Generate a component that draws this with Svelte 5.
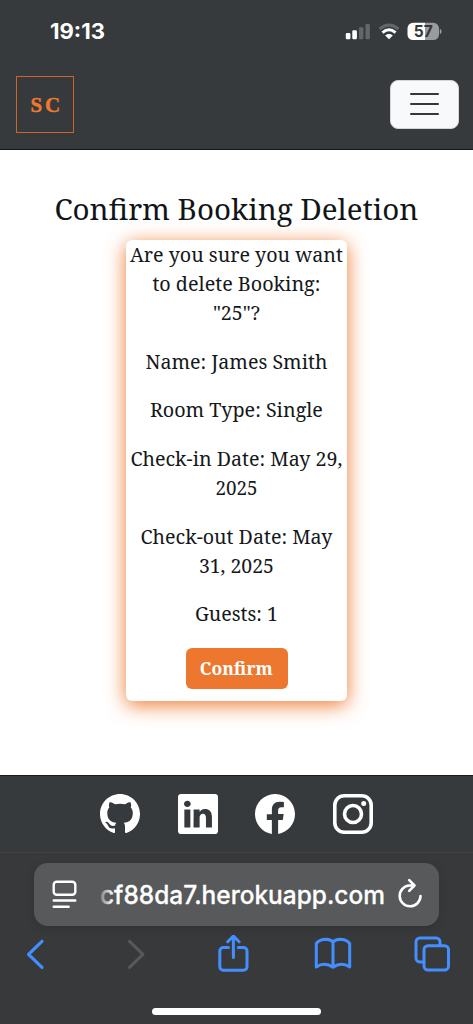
<script>
  const paragraphs = [
    [
      { text: 'Are you sure you want', width: 213 },
      { text: 'to delete Booking:', width: 168 },
      { text: '"25"?', width: 47 }
    ],
    [{ text: 'Name: James Smith', width: 182 }],
    [{ text: 'Room Type: Single', width: 173 }],
    [
      { text: 'Check-in Date: May 29,', width: 212 },
      { text: '2025', width: 42 }
    ],
    [
      { text: 'Check-out Date: May', width: 192 },
      { text: '31, 2025', width: 75 }
    ],
    [{ text: 'Guests: 1', width: 83 }]
  ];
</script>

<div class="screen">
  <header>
    <div class="status">
      <svg class="clock" width="60" height="24"><text x="1" y="18.900" textLength="55" lengthAdjust="spacingAndGlyphs">19:13</text></svg>
      <svg class="indicators" width="98" height="24" viewBox="0 0 98 24">
        <rect x="1.800" y="13" width="4.600" height="6.300" rx="1.200" fill="#fff" />
        <rect x="8.300" y="10.300" width="4.600" height="9" rx="1.200" fill="#fff" />
        <rect x="15" y="7.200" width="4.400" height="12.100" rx="1.200" fill="#646668" />
        <rect x="21.500" y="4" width="4.400" height="15.300" rx="1.200" fill="#646668" />
        <g fill="none" stroke-width="3">
          <path d="M35.600 9Q45 .9 54.400 9" stroke="#646668" />
          <path d="M38.500 12.600Q45 7 51.500 12.600" stroke="#fff" />
        </g>
        <path d="M41.200 15.500Q45 12.600 48.800 15.500L45 19.200Z" fill="#fff" />
        <path d="M69 2.800h12v17.200H69a5.500 5.500 0 0 1-5.500-5.500v-6.200A5.500 5.500 0 0 1 69 2.800Z" fill="#fff" />
        <path d="M81 2.800h8.500a5.500 5.500 0 0 1 5.500 5.500v6.200a5.500 5.500 0 0 1-5.500 5.500H81Z" fill="#9a9b9d" />
        <path d="M95.800 8.700q1.800 .8 1.800 2.800t-1.800 2.800Z" fill="#9a9b9d" />
        <text x="69.700" y="17" textLength="19" lengthAdjust="spacingAndGlyphs">57</text>
      </svg>
    </div>
    <nav>
      <div class="logo"><svg width="56" height="56"><text x="13.500" y="35">S</text><text x="28" y="35">C</text></svg></div>
      <button class="menu" aria-label="Menu"><i></i><i></i><i></i></button>
    </nav>
  </header>

  <main>
    <h1><svg width="380" height="46"><text x="7.400" y="32.700" textLength="364" lengthAdjust="spacingAndGlyphs">Confirm Booking Deletion</text></svg></h1>
    <section class="card">
      {#each paragraphs as lines}
        <p>
          {#each lines as line}
            <svg width="220" height="29"><text x={109.4 - line.width / 2} y="21.900" textLength={line.width} lengthAdjust="spacingAndGlyphs">{line.text}</text></svg>
          {/each}
        </p>
      {/each}
      <button class="confirm"><svg width="90" height="35"><text x="7.800" y="23.700" textLength="73" lengthAdjust="spacingAndGlyphs">Confirm</text></svg></button>
    </section>
  </main>

  <footer>
    <svg viewBox="0 0 16 16"><path d="M8 0C3.58 0 0 3.58 0 8c0 3.54 2.29 6.53 5.47 7.59.4.07.55-.17.55-.38 0-.19-.01-.82-.01-1.49-2.01.37-2.53-.49-2.69-.94-.09-.23-.48-.94-.82-1.13-.28-.15-.68-.52-.01-.53.63-.01 1.08.58 1.23.82.72 1.21 1.87.87 2.33.66.07-.52.28-.87.51-1.07-1.78-.2-3.64-.89-3.64-3.95 0-.87.31-1.59.82-2.15-.08-.2-.36-1.02.08-2.12 0 0 .67-.21 2.2.82.64-.18 1.32-.27 2-.27s1.36.09 2 .27c1.53-1.04 2.2-.82 2.2-.82.44 1.1.16 1.92.08 2.12.51.56.82 1.27.82 2.15 0 3.07-1.87 3.75-3.65 3.95.29.25.54.73.54 1.48 0 1.07-.01 1.93-.01 2.2 0 .21.15.46.55.38A8.01 8.01 0 0 0 16 8c0-4.42-3.58-8-8-8" /></svg>
    <svg viewBox="0 0 16 16"><path d="M0 1.146C0 .513.526 0 1.175 0h13.650C15.474 0 16 .513 16 1.146v13.708c0 .633-.526 1.146-1.175 1.146H1.175C.526 16 0 15.487 0 14.854zm4.943 12.248V6.169H2.542v7.225zm-1.200-8.212c.837 0 1.358-.554 1.358-1.248-.015-.709-.520-1.248-1.342-1.248S2.400 3.226 2.400 3.934c0 .694.521 1.248 1.327 1.248zm4.908 8.212V9.359c0-.216.016-.432.080-.586.173-.431.568-.878 1.232-.878.869 0 1.216.662 1.216 1.634v3.865h2.401V9.250c0-2.220-1.184-3.252-2.764-3.252-1.274 0-1.845.7-2.165 1.193V6.169h-2.400c.03.678 0 7.225 0 7.225z" /></svg>
    <svg viewBox="0 0 16 16"><path d="M16 8.049c0-4.446-3.582-8.050-8-8.050C3.580 0-.002 3.603-.002 8.050c0 4.017 2.926 7.347 6.750 7.951v-5.625h-2.030V8.050H6.750V6.275c0-2.017 1.195-3.131 3.022-3.131.876 0 1.791.157 1.791.157v1.980h-1.009c-.993 0-1.303.621-1.303 1.258v1.510h2.218l-.354 2.326H9.250V16c3.824-.604 6.750-3.934 6.750-7.951" /></svg>
    <svg viewBox="0 0 40 40"><g fill="none" stroke="#fff" stroke-width="3.600"><rect x="1.800" y="1.800" width="36.400" height="36.400" rx="9.500" /><circle cx="20" cy="20" r="8.500" /></g><circle cx="30.700" cy="9.400" r="2.500" /></svg>
  </footer>

  <div class="browser">
    <div class="address">
      <svg class="page" width="26" height="30" viewBox="0 0 26 30" fill="none" stroke="#fff" stroke-width="2.400" stroke-linecap="round"><rect x="1.700" y="1.700" width="21.600" height="13" rx="3" /><path d="M1.700 20.500h21.600M1.700 26.700h15" /></svg>
      <svg class="url" width="304" height="50">
        <defs><linearGradient id="fade" gradientUnits="userSpaceOnUse" x1="9" y1="0" x2="23" y2="0"><stop stop-color="#77787a" /><stop offset="1" stop-color="#fff" /></linearGradient></defs>
        <text x="10" y="33.600" textLength="285" lengthAdjust="spacingAndGlyphs">cf88da7.herokuapp.com</text>
      </svg>
      <svg class="reload" width="26" height="32" viewBox="0 0 26 32" fill="none" stroke="#fff" stroke-width="2.600" stroke-linecap="round" stroke-linejoin="round"><path d="M17.500 7.500H12.500A10.400 10.400 0 1 0 23.500 18M12.200 2.200l5.300 5.300-5.300 5.300" /></svg>
    </div>
    <div class="tools">
      <svg width="38" height="38" viewBox="0 0 38 38"><path d="M26 6.300L12.500 19.300 26 32.300" stroke-width="3.200" /></svg>
      <svg class="off" width="38" height="38" viewBox="0 0 38 38"><path d="M14.500 6.300l13.500 13-13.500 13" stroke-width="3" /></svg>
      <svg width="38" height="38" viewBox="0 0 38 38"><path d="M14.500 12.500H9.300a3.500 3.500 0 0 0-3.500 3.500v15.700a3.500 3.500 0 0 0 3.500 3.500h20.200a3.500 3.500 0 0 0 3.500-3.500V16a3.500 3.500 0 0 0-3.500-3.500h-5.200M19.400 22.500V1.500M13.700 6.800l5.700-5.700 5.700 5.700" /></svg>
      <svg width="38" height="38" viewBox="0 0 38 38"><path d="M19 7Q17 4.500 12 4.200C8 4.200 4.500 5.500 2.300 8.500V32Q10.500 26.500 19 32.200 27.500 26.500 35.700 32V8.500C33.500 5.500 30 4.200 26 4.200Q21 4.500 19 7v25" /></svg>
      <svg width="38" height="38" viewBox="0 0 38 38"><path d="M9.500 27H7A4 4 0 0 1 3 23V7a4 4 0 0 1 4-4h16a4 4 0 0 1 4 4v3" /><rect x="11" y="10.700" width="24.500" height="24.300" rx="4" /></svg>
    </div>
    <div class="home"></div>
  </div>
</div>

<style>
  :global(body) { margin: 0; background: #fff; }
  * { box-sizing: border-box; }
  .screen { width: 473px; height: 1024px; overflow: hidden; display: flex; flex-direction: column; background: #fff; }
  svg { display: block; flex: none; }
  header { height: 150px; background: #373a3c; border-bottom: 1px solid #17191a; }
  .status { height: 75px; padding: 20px 31px 0 49px; display: flex; justify-content: space-between; }
  .clock text { font: 700 21px Inter, sans-serif; fill: #fff; }
  .indicators text { font: 700 16.500px Inter, sans-serif; fill: #35383a; }
  nav { display: flex; justify-content: space-between; padding: 1px 14px 0 16px; }
  .logo { width: 58px; height: 57px; border: 1px solid #c9652c; }
  .logo text { font: 700 21px "Liberation Serif", serif; fill: #ef792f; stroke: #ef792f; stroke-width: 0.4; }
  .menu { width: 69px; height: 49px; margin-top: 4px; border: 1px solid #d4d6d9; border-radius: 8px; background: #f8f9fa; padding: 0 0 1px; display: flex; flex-direction: column; align-items: center; justify-content: center; gap: 8px; }
  .menu i { width: 29px; height: 2px; background: #34373b; border-radius: 1px; }
  main { height: 625px; padding-top: 37px; display: flex; flex-direction: column; align-items: center; }
  h1 { margin: 0; height: 53px; }
  h1 text { font: 400 29.500px "Noto Serif", "Liberation Serif", serif; fill: #111518; }
  .card { width: 221px; height: 461px; border-radius: 6px; background: #fff; box-shadow: 0 4px 20px #ee7930; display: flex; flex-direction: column; align-items: center; }
  p { margin: 0 0 19.700px; }
  p text { font: 400 19px "Noto Serif", "DejaVu Serif Condensed", "DejaVu Serif", serif; fill: #15181b; }
  .confirm { width: 102px; height: 41px; padding: 3px 6px; border: 0; border-radius: 6px; background: #ed772e; }
  .confirm text { font: 700 18px "Noto Serif", "DejaVu Serif Condensed", "DejaVu Serif", serif; fill: #fff; }
  footer { height: 77px; border-top: 1px solid #191b1c; background: #373a3c; display: flex; justify-content: center; gap: 37.800px; padding-top: 18px; }
  footer svg { width: 40px; height: 40px; fill: #fff; }
  .browser { height: 172px; background: #38393b; border-top: 1px solid #404143; padding-top: 10px; }
  .address { width: 405px; height: 63px; margin: 0 34px; border-radius: 14px; background: #58595b; box-shadow: 0 2px 10px #0002; display: flex; align-items: center; padding-left: 18px; }
  .url { margin-left: 12px; }
  .url text { font: 500 25.500px Inter, sans-serif; fill: url(#fade); stroke: url(#fade); stroke-width: 0.35; }
  .reload { margin-left: 3px; margin-top: -2px; }
  .tools { display: flex; justify-content: space-between; padding: 9px 22px 0 15.500px; }
  .tools svg { fill: none; stroke: #438fff; stroke-width: 3; stroke-linecap: round; stroke-linejoin: round; }
  .tools .off { stroke: #58595b; }
  .home { width: 169px; height: 7px; border-radius: 4px; background: #fff; margin: 35px auto 0; }
</style>
